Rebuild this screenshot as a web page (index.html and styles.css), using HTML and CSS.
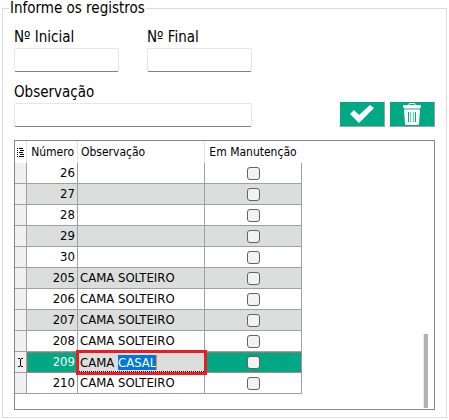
FILE: index.html
```
<!DOCTYPE html>
<html lang="pt-BR">
<head>
    <meta charset="UTF-8">
    <meta name="viewport" content="width=device-width, initial-scale=1.0">
    <title>Registros</title>
    <link rel="stylesheet" href="styles.css">
</head>
<body>
    <fieldset class="registros">
        <legend>Informe os registros</legend>
        <div class="form-row">
            <div class="field numero">
                <label for="inicial">Nº Inicial</label>
                <input type="text" id="inicial">
            </div>
            <div class="field numero">
                <label for="final">Nº Final</label>
                <input type="text" id="final">
            </div>
        </div>
        <div class="form-row">
            <div class="field observacao">
                <label for="observacao">Observação</label>
                <input type="text" id="observacao">
            </div>
            <div class="buttons">
                <button type="button" aria-label="Confirmar">
                    <svg width="24" height="18" viewBox="0 0 24 18">
                        <path d="M0 9 L4 5 L9 10 L20 0 L24 3 L9 18 Z" fill="#fff"/>
                    </svg>
                </button>
                <button type="button" aria-label="Excluir">
                    <svg width="18" height="22" viewBox="0 0 18 22">
                        <path d="M6 2.5 V1 Q6 .5 6.5 .5 H11.5 Q12 .5 12 1 V2.5" fill="none" stroke="#fff"/>
                        <rect x="0" y="2" width="18" height="3" rx="1" fill="#fff"/>
                        <path d="M1 5 H17 V7 H1 Z" fill="#8fd8c6"/>
                        <path d="M1 7 H17 L16 21 Q16 22 15 22 H3 Q2 22 2 21 Z" fill="#fff"/>
                        <path d="M5.5 9 V19 M12.5 9 V19" stroke="#00a884"/>
                        <path d="M7.5 9 V19 M10.5 9 V19" stroke="#6fcdb7"/>
                        <path d="M9 9 V19" stroke="#d0f0e8"/>
                    </svg>
                </button>
            </div>
        </div>
        <div class="grid">
            <table>
                <thead>
                    <tr>
                        <th class="indicator">
                            <svg width="7" height="9" viewBox="0 0 7 9">
                                <path d="M0 .5 H1 M2 .5 H6 M0 2.5 H1 M3 2.5 H7 M0 4.5 H1 M2 4.5 H6 M0 6.5 H1 M3 6.5 H7 M0 8.5 H1 M2 8.5 H7" stroke="#000"/>
                            </svg>
                        </th>
                        <th class="num">Número</th>
                        <th class="obs">Observação</th>
                        <th class="manut">Em Manutenção</th>
                    </tr>
                </thead>
                <tbody>
                    <tr><td class="indicator"></td><td class="num">26</td><td></td><td class="manut"><input type="checkbox" aria-label="Em Manutenção 26"></td></tr>
                    <tr><td class="indicator"></td><td class="num">27</td><td></td><td class="manut"><input type="checkbox" aria-label="Em Manutenção 27"></td></tr>
                    <tr><td class="indicator"></td><td class="num">28</td><td></td><td class="manut"><input type="checkbox" aria-label="Em Manutenção 28"></td></tr>
                    <tr><td class="indicator"></td><td class="num">29</td><td></td><td class="manut"><input type="checkbox" aria-label="Em Manutenção 29"></td></tr>
                    <tr><td class="indicator"></td><td class="num">30</td><td></td><td class="manut"><input type="checkbox" aria-label="Em Manutenção 30"></td></tr>
                    <tr><td class="indicator"></td><td class="num">205</td><td>CAMA SOLTEIRO</td><td class="manut"><input type="checkbox" aria-label="Em Manutenção 205"></td></tr>
                    <tr><td class="indicator"></td><td class="num">206</td><td>CAMA SOLTEIRO</td><td class="manut"><input type="checkbox" aria-label="Em Manutenção 206"></td></tr>
                    <tr><td class="indicator"></td><td class="num">207</td><td>CAMA SOLTEIRO</td><td class="manut"><input type="checkbox" aria-label="Em Manutenção 207"></td></tr>
                    <tr><td class="indicator"></td><td class="num">208</td><td>CAMA SOLTEIRO</td><td class="manut"><input type="checkbox" aria-label="Em Manutenção 208"></td></tr>
                    <tr class="selected">
                        <td class="indicator">
                            <svg width="5" height="9" viewBox="0 0 5 9">
                                <path d="M0 .5 H2 M3 .5 H5 M2.5 1 V8 M0 8.5 H2 M3 8.5 H5" stroke="#000" fill="none"/>
                            </svg>
                        </td>
                        <td class="num">209</td>
                        <td class="editing"><input type="text" id="edit-obs" value="CAMA CASAL" aria-label="Observação 209"><span class="caret"></span></td>
                        <td class="manut"><input type="checkbox" aria-label="Em Manutenção 209"></td>
                    </tr>
                    <tr><td class="indicator"></td><td class="num">210</td><td>CAMA SOLTEIRO</td><td class="manut"><input type="checkbox" aria-label="Em Manutenção 210"></td></tr>
                </tbody>
            </table>
            <div class="scroll-thumb"></div>
        </div>
    </fieldset>
    <script>
        // the row being edited opens with its last word selected
        const editObs = document.getElementById('edit-obs');
        editObs.focus();
        editObs.setSelectionRange(5, 10);
    </script>
</body>
</html>
```
FILE: styles.css
```
* {
    box-sizing: border-box;
}
body {
    margin: 0;
    background-color: #fff;
    color: #000;
    font-family: "DejaVu Sans Condensed", "Noto Sans", sans-serif;
    font-size: 15px;
    line-height: 18px;
}
input {
    font: inherit;
    color: inherit;
}
.registros {
    margin: 0 2px;
    padding: 11px 11px 7px;
    border: 1px solid #dcdcdc;
    min-width: 0;
}
.registros legend {
    margin-left: -5px;
    padding: 0 1px;
    line-height: 17px;
}
.form-row {
    display: flex;
    justify-content: space-between;
    align-items: flex-end;
    margin-bottom: 11px;
}
.form-row:first-of-type {
    justify-content: flex-start;
    gap: 28px;
}
.field {
    display: flex;
    flex-direction: column;
    gap: 2px;
}
.field input {
    width: 100%;
    height: 24px;
    padding: 0 4px;
    background-color: #fff;
    border: 1px solid #e6e6e6;
    border-bottom-color: #808080;
    border-radius: 2px;
}
.numero {
    width: 105px;
}
.observacao {
    width: 238px;
}
.buttons {
    display: flex;
    gap: 4px;
}
.buttons button {
    display: flex;
    align-items: center;
    justify-content: center;
    width: 46px;
    height: 26px;
    padding: 0;
    border: 1px solid #a0a0a0;
    border-top-color: #fff;
    border-left-color: #fff;
    background-color: #00a884;
    cursor: pointer;
}
.grid {
    position: relative;
    margin-top: 13px;
    padding-bottom: 15px;
    border: 1px solid #828790;
    font-size: 13px;
}
table {
    width: 287px;
    table-layout: fixed;
    border-spacing: 0;
    line-height: 16px;
}
th {
    height: 22px;
    padding: 0 3px;
    border-right: 1px solid #e5e5e5;
    font-size: 12px;
    font-weight: normal;
    text-align: left;
    white-space: nowrap;
}
th:last-child {
    border-right-color: #fff;
}
td {
    height: 21px;
    padding: 0 2px;
    border-right: 1px solid #a0a0a0;
    border-bottom: 1px solid #a0a0a0;
    white-space: nowrap;
}
tbody tr:nth-child(even) td {
    background-color: #dcdedd;
}
.indicator {
    width: 12px;
    padding: 0;
    text-align: center;
}
.indicator svg {
    display: block;
    margin: 0 auto;
}
tbody tr td.indicator {
    background-color: #f0f0f0;
}
.num {
    width: 51px;
    text-align: right;
}
.obs {
    width: 127px;
}
.manut {
    width: 97px;
    text-align: center;
}
.manut input {
    appearance: none;
    display: block;
    width: 13px;
    height: 13px;
    margin: 0 auto;
    border: 1px solid #626262;
    border-radius: 3px;
    background-color: #f3f3f3;
}
tbody tr.selected td.num,
tbody tr.selected td.manut {
    background-color: #00a884;
    color: #fff;
    outline: 1px dotted #e0607a;
    outline-offset: -1px;
}
tbody tr td.editing {
    position: relative;
    z-index: 1;
    padding: 0;
    outline: 3px solid #ed1c24;
    outline-offset: -1px;
}
.editing input {
    display: block;
    width: 100%;
    height: 20px;
    padding: 0 2px;
    border: 0;
    border-top: 1px dotted #000;
    border-bottom: 1px dotted #000;
    background-color: transparent;
    outline: none;
}
.editing input::selection {
    background-color: #0078d7;
    color: #fff;
}
.caret {
    position: absolute;
    top: 3px;
    left: 78px;
    width: 1px;
    height: 15px;
    background-color: #ff8728;
}
.scroll-thumb {
    position: absolute;
    right: 6px;
    bottom: 1px;
    width: 5px;
    height: 74px;
    border-left: 1px solid #ececec;
    background-color: #b2b2b2;
}
```
